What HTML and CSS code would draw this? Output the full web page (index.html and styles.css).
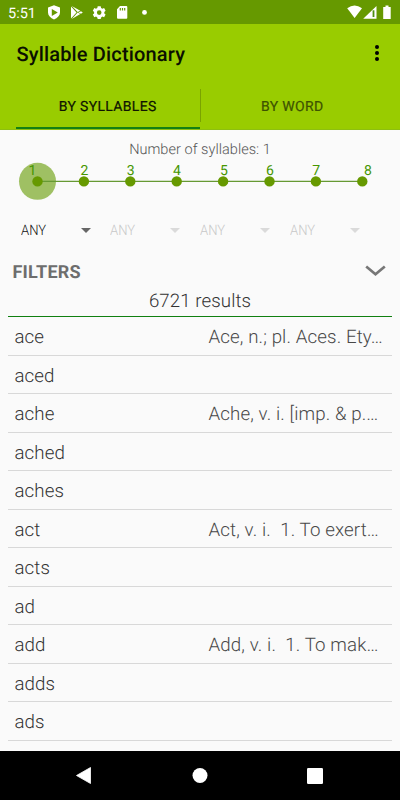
FILE: index.html
```
<!DOCTYPE html>
<html lang="en">
<head>
<meta charset="utf-8">
<title>Syllable Dictionary</title>
<link rel="stylesheet" href="styles.css">
</head>
<body>
<div class="status">
  <span class="clock">5:51</span>
  <svg class="status-left" width="108" height="24" viewBox="0 0 108 24" fill="#fff">
    <path fill-rule="evenodd" d="M8 5.200 14 7.500v5c0 3.200-2.500 5.500-6 6.900-3.500-1.400-6-3.700-6-6.900v-5zM5.800 9v7l6-3.500z"/>
    <path d="M25 6.500v12l5.500-6z"/>
    <path d="M25.800 6l8.500 4.700-2.600 1.300zM25.800 19l8.500-5-2.600-1.400zM32.500 12.400l2.500-1.200 1.800 1.200-1.800 1.300z"/>
    <path fill-rule="evenodd" d="m50.200 6.200-.4 1.700-1.300.8-1.700-.6-1.500 2.600 1.300 1.200v1.500l-1.300 1.200 1.500 2.600 1.700-.6 1.300.8.4 1.700h3l.4-1.700 1.300-.8 1.700.6 1.500-2.600-1.300-1.200v-1.500l1.300-1.200-1.500-2.600-1.700.6-1.300-.8-.4-1.700zM51.700 10.300a2.300 2.300 0 1 1 0 4.600 2.300 2.300 0 0 1 0-4.600z" transform="translate(1.500 0)"/>
    <path fill-rule="evenodd" d="M72.300 6h6.300q1 0 1 1v10.700q0 1-1 1h-8.300q-1 0-1-1V9.300zM72 8v2.500h1.200V8zm2.200 0v2.500h1.200V8zm2.200 0v2.500h1.200V8z" transform="translate(1.700 0)"/>
    <circle cx="98.500" cy="12.400" r="2.400"/>
  </svg>
  <svg class="status-right" width="48" height="24" viewBox="0 0 48 24" fill="#fff">
    <path d="M.2 8.200Q7.500 2.600 15 8.200L7.600 18z"/>
    <path d="M29.500 6v12.800H16.200z"/>
    <path fill="#4d8f10" d="M25.600 10.300h1.800v6.700h-1.800z"/>
    <path d="M38.500 5.500h3V7h2.200v12h-7.500V7h2.300z"/>
  </svg>
</div>
<header class="appbar">
  <div class="titlebar">
    <h1>Syllable Dictionary</h1>
    <svg width="6" height="18" viewBox="0 0 6 18"><circle cx="3" cy="3" r="2"/><circle cx="3" cy="9" r="2"/><circle cx="3" cy="15" r="2"/></svg>
  </div>
  <nav class="tabs">
    <div class="tab active"><span>BY SYLLABLES</span></div>
    <div class="tab"><span>BY WORD</span></div>
  </nav>
</header>
<main>
  <div class="count">Number of syllables: 1</div>
  <svg class="slider" width="400" height="42" viewBox="0 160 400 42">
    <circle cx="37.500" cy="181.300" r="18.500" fill="#9fc063"/>
    <path d="M37.500 181.400H362.300" stroke="#669933" stroke-width="1.100"/>
    <g fill="#669900"><circle cx="37.500" cy="181.400" r="5.200"/><circle cx="83.900" cy="181.400" r="5.200"/><circle cx="130.300" cy="181.400" r="5.200"/><circle cx="176.700" cy="181.400" r="5.200"/><circle cx="223.100" cy="181.400" r="5.200"/><circle cx="269.500" cy="181.400" r="5.200"/><circle cx="315.900" cy="181.400" r="5.200"/><circle cx="362.300" cy="181.400" r="5.200"/></g>
    <g class="ticks"><text x="32.500" y="174.500">1</text><text x="84.400" y="174.500">2</text><text x="130.600" y="174.500">3</text><text x="177" y="174.500">4</text><text x="224" y="174.500">5</text><text x="269.900" y="174.500">6</text><text x="316.200" y="174.500">7</text><text x="368" y="174.500">8</text></g>
  </svg>
  <div class="spinners">
    <div class="spinner on"><span>ANY</span><i></i></div>
    <div class="spinner"><span>ANY</span><i></i></div>
    <div class="spinner"><span>ANY</span><i></i></div>
    <div class="spinner"><span>ANY</span><i></i></div>
  </div>
  <div class="filters"><span>FILTERS</span><svg width="22" height="14" viewBox="0 0 22 14"><path d="M1.200 1.500 10.500 9.200 19.800 1.500" fill="none" stroke="#777" stroke-width="2.700"/></svg></div>
  <div class="results">6721 results</div>
  <div class="list">
    <div class="row"><span>ace</span><span class="def">Ace, n.; pl. Aces. Ety…</span></div>
    <div class="row"><span>aced</span></div>
    <div class="row"><span>ache</span><span class="def">Ache, v. i. [imp. &amp; p.…</span></div>
    <div class="row"><span>ached</span></div>
    <div class="row"><span>aches</span></div>
    <div class="row"><span>act</span><span class="def">Act, v. i.  1. To exert…</span></div>
    <div class="row"><span>acts</span></div>
    <div class="row"><span>ad</span></div>
    <div class="row"><span>add</span><span class="def">Add, v. i.  1. To mak…</span></div>
    <div class="row"><span>adds</span></div>
    <div class="row"><span>ads</span></div>
  </div>
</main>
<footer class="navbar">
  <svg width="400" height="49" viewBox="0 0 400 49" fill="#fff"><path d="M76.500 24.500 90.500 16.500v16z" stroke="#fff" stroke-width=".8" stroke-linejoin="round"/><circle cx="200" cy="24.500" r="7.500"/><rect x="307" y="17" width="16" height="16" rx="1.200"/></svg>
</footer>
</body>
</html>
```
FILE: styles.css
```
* { box-sizing: border-box; }
body { margin: 0; width: 400px; height: 800px; overflow: hidden; display: flex; flex-direction: column; background: #fafafa; font-family: Roboto, sans-serif; color: #555; text-rendering: geometricPrecision; }
svg { display: block; flex: none; }
.status { height: 24px; flex: none; background: #669900; display: flex; align-items: center; padding: 0 7px 0 8px; color: #fff; }
.clock { font-size: 14.5px; width: 38px; padding-top: 2px; }
.status-right { margin-left: auto; margin-right: -2px; }
.appbar { height: 106px; flex: none; background: #99cc00; display: flex; flex-direction: column; border-bottom: 1px solid #8dbf10; }
.titlebar { height: 58px; padding: 0 20px 0 16.5px; display: flex; align-items: center; justify-content: space-between; }
h1 { margin: 0; padding-top: 2px; font-size: 20px; letter-spacing: .16px; font-weight: 500; color: #0b1000; white-space: nowrap; }
.tabs { display: flex; flex: 1; padding: 0 16px; }
.tab { flex: 1; padding-top: 16px; text-align: center; font-size: 14px; letter-spacing: .34px; line-height: 18px; font-weight: 400; -webkit-text-stroke: .2px; color: #3d5200; }
.tab.active { color: #0f1400; border-bottom: 2px solid #148014; }
.tab + .tab { padding-left: 1px; background: linear-gradient(#7aa300, #7aa300) 0 7px / 1px 33px no-repeat; }
main { height: 621px; flex: none; overflow: hidden; }
.count { padding-top: 10px; height: 30px; line-height: 20px; text-align: center; font-size: 14.5px; letter-spacing: .04px; font-weight: 300; color: #555; }
.ticks { font-size: 14px; fill: #459600; text-anchor: middle; }
.spinners { display: flex; height: 56px; padding: 18px 20.5px 0; }
.spinner { width: 89.8px; display: flex; align-items: center; height: 20px; font-size: 14.5px; color: #c8c8c8; font-weight: 300; }
.spinner span { width: 60px; padding-top: 1px; transform: scaleX(.9); transform-origin: 0 50%; }
.spinner i { border: 5px solid transparent; border-top-color: #dadada; border-bottom: 0; }
.spinner.on { color: #111; }
.spinner.on i { border-top-color: #666; }
.filters { height: 28px; padding: 0 13.5px 0 12.5px; display: flex; align-items: center; justify-content: space-between; font-size: 18px; letter-spacing: .22px; font-weight: 700; color: #6d6d6d; }
.results { height: 31px; margin: 0 8px; border-bottom: 1px solid #108010; line-height: 30px; font-size: 18.7px; letter-spacing: .08px; font-weight: 300; text-align: center; color: #333; }
.list { margin: 0 8px; }
.row { height: 38.53px; border-bottom: 1px solid #d8d8d8; display: flex; align-items: center; font-size: 18.7px; letter-spacing: .08px; font-weight: 300; white-space: pre; padding: 2.5px 0 0 6.5px; color: #333; }
.row span:first-child { width: 194px; }
.def { color: #484848; letter-spacing: .12px; }
.navbar { height: 49px; flex: none; background: #000; }
```
